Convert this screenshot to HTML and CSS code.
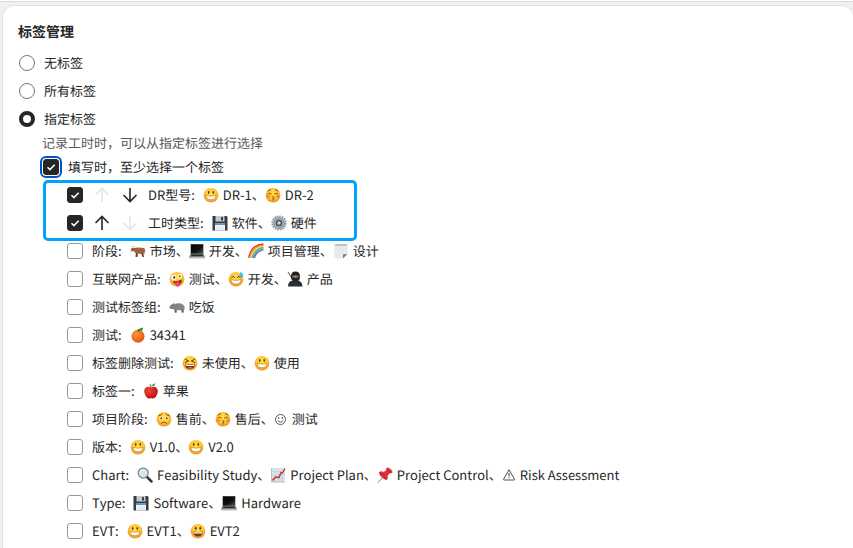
FILE: index.html
```html
<!DOCTYPE html>
<html lang="zh-CN">
<head>
<meta charset="utf-8">
<meta name="viewport" content="width=device-width, initial-scale=1">
<title>标签管理</title>
<link rel="stylesheet" href="styles.css">
</head>
<body>
<svg class="sprite" aria-hidden="true">
  <defs>
    <radialGradient id="skin" cx=".5" cy=".4" r=".6"><stop offset="0" stop-color="#ffe54d"/><stop offset=".6" stop-color="#fdc634"/><stop offset="1" stop-color="#ee8e20"/></radialGradient>
    <linearGradient id="screen" x1="0" y1="0" x2="1" y2="1"><stop offset="0" stop-color="#050505"/><stop offset=".6" stop-color="#111"/><stop offset="1" stop-color="#555"/></linearGradient>
    <radialGradient id="orange" cx=".4" cy=".35" r=".7"><stop offset="0" stop-color="#ff9a3c"/><stop offset="1" stop-color="#e2500f"/></radialGradient>
    <radialGradient id="apple" cx=".35" cy=".35" r=".7"><stop offset="0" stop-color="#f4463a"/><stop offset="1" stop-color="#b80d14"/></radialGradient>
    <symbol id="face" viewBox="0 0 32 32"><circle cx="16" cy="16.5" r="14.7" fill="url(#skin)"/></symbol>
    <symbol id="grin" viewBox="0 0 32 32"><use href="#face"/><ellipse cx="11.500" cy="11" rx="1.600" ry="2.800" fill="#6b3a0c"/><ellipse cx="20.500" cy="11" rx="1.600" ry="2.800" fill="#6b3a0c"/><path d="M6 17q10 2.500 20 0q-1 8.500-10 8.500q-9 0-10-8.500z" fill="#fffdf4" stroke="#a8641c" stroke-width="1"/></symbol>
    <symbol id="smiley" viewBox="0 0 32 32"><use href="#face"/><ellipse cx="11.500" cy="10.500" rx="1.900" ry="3" fill="#6b3a0c"/><ellipse cx="20.500" cy="10.500" rx="1.900" ry="3" fill="#6b3a0c"/><path d="M6.500 16.500q9.500 2.500 19 0q-.5 10.500-9.500 10.500q-9 0-9.500-10.500z" fill="#7a3a10"/><path d="M7.500 17.500q8.500 2 17 0q0 3.500-1.500 3.500h-14q-1.500 0-1.500-3.500z" fill="#fff"/></symbol>
    <symbol id="kiss" viewBox="0 0 32 32"><use href="#face"/><ellipse cx="6.500" cy="19" rx="4" ry="3" fill="#f27a2e" opacity=".7"/><ellipse cx="25.500" cy="19" rx="4" ry="3" fill="#f27a2e" opacity=".7"/><g fill="none" stroke="#74400f" stroke-width="1.800" stroke-linecap="round"><path d="M6 14q3.500-4 7 0M19 14q3.500-4 7 0M6 8q2-2.500 5-2.500M21 5.500q3 0 5 2.500"/><path d="M15 19q4 .5 2.500 2.500q-.5 1-2 1q3 .5 2.500 2q-.5 1.500-3 1.500" stroke="#b43b1b"/></g></symbol>
    <symbol id="zany" viewBox="0 0 32 32"><use href="#face"/><circle cx="9.500" cy="13" r="5" fill="#fff"/><circle cx="22" cy="10" r="3.800" fill="#fff"/><circle cx="10.500" cy="13" r="2.300" fill="#4b2b12"/><circle cx="21.500" cy="10.500" r="1.700" fill="#4b2b12"/><path d="M7 20q10 2 18-3q2 8-6 10q-8 1-12-7z" fill="#70300d"/><path d="M12 22q5 0 8-2l2 7q0 4-4 4.500q-4 0-5-4z" fill="#ee3f78"/></symbol>
    <symbol id="sweat" viewBox="0 0 32 32"><use href="#face"/><path d="M7 13q4-5 7 0M18 13q4-5 7 0" fill="none" stroke="#6b3a0c" stroke-width="2" stroke-linecap="round"/><path d="M6 17.500q10 2.500 20 0q-1 8.500-10 8.500q-9 0-10-8.500z" fill="#fff" stroke="#a8641c" stroke-width="1"/><path d="M26 1q5 6 4.500 9q-.5 3-3.500 3q-4 0-4.300-3.500q0-3 3.300-8.500z" fill="#4bb9ef"/></symbol>
    <symbol id="laugh" viewBox="0 0 32 32"><use href="#face"/><path d="M6.500 8.500l7 3.500l-7 3M25.500 8.500l-7 3.500l7 3" fill="none" stroke="#6b3a0c" stroke-width="2" stroke-linecap="round" stroke-linejoin="round"/><path d="M6 17.500q10 2 20 0q0 10-10 10q-10 0-10-10z" fill="#6e2c0c"/><path d="M7 18.500q9 2 18 0q0 3.500-2 3.500h-14q-2 0-2-3.500z" fill="#fff"/><path d="M11 25q5-3 10 0q-5 3.500-10 0z" fill="#ee5a55"/></symbol>
    <symbol id="worried" viewBox="0 0 32 32"><use href="#face"/><circle cx="10.500" cy="14" r="3.200" fill="#fff"/><circle cx="21.500" cy="14" r="3.200" fill="#fff"/><circle cx="10.500" cy="14.500" r="1.900" fill="#573010"/><circle cx="21.500" cy="14.500" r="1.900" fill="#573010"/><path d="M6 9.500q4-.5 6-3.500M26 9.500q-4-.5-6-3.500M10.500 25q5.500-6 11 0" fill="none" stroke="#74400f" stroke-width="1.900" stroke-linecap="round"/></symbol>
    <symbol id="floppy" viewBox="0 0 32 32"><path d="M1 2h28l2 2v27H1z" fill="#343d47"/><path d="M7 2h18v11H7z" fill="#c6cbd0"/><path d="M18 4h4v7h-4z" fill="#39424c"/><path d="M6 17h20v14H6z" fill="#f3f5f7"/><path d="M6 17h20v3H6z" fill="#5b94c9"/><path d="M8 24h16M8 28h16" stroke="#c2c8ce"/></symbol>
    <symbol id="gear" viewBox="0 0 32 32"><circle cx="16" cy="16" r="13.500" fill="none" stroke="#8f979f" stroke-width="3.500" stroke-dasharray="3.500 1.800"/><circle cx="16" cy="16" r="10.500" fill="#bcc3c9" stroke="#8b949d" stroke-width="3"/><circle cx="16" cy="16" r="5.500" fill="#8fa5bb" stroke="#44586e" stroke-width="3"/><circle cx="16" cy="16" r="2" fill="#e6ebef"/></symbol>
    <symbol id="ox" viewBox="0 0 32 32"><path d="M8 10q8-2 20 0q3 2 2.500 9l-.8 4q-1-2-.8-7l-1.400 4l.5 8h-3l-1-7q-5 1-8 0l-1 7h-3l-.5-8q-3-1-4-4q-4 1-6-2q0-3 3-4z" fill="#a0613f"/><path d="M12 20l-1 8h3l1-7zM24 19l3 9h-2l-3-8z" fill="#683a28"/><path d="M2 6q1 4 4 3q4 0 4-4q-2 2-4 2q-3 1-4-1z" fill="#d4bea1"/><path d="M1 15l4 1l-1 2q-3 0-3-3z" fill="#d29c79"/><circle cx="5" cy="12.500" r=".8" fill="#24120c"/></symbol>
    <symbol id="laptop" viewBox="0 0 32 32"><path d="M3 2h26v20H3z" fill="#70757b"/><path d="M4 3h24v18H4z" fill="url(#screen)"/><path d="M3 22h26l3 7H0z" fill="#777c82"/><path d="M5 23h22l1 3H4z" fill="#272a2e"/><path d="M0 29h32v2H0z" fill="#b5b9bd"/></symbol>
    <symbol id="rainbow" viewBox="0 0 32 32"><g fill="none" stroke-width="2.600"><path d="M1.500 30Q5 4 31 2" stroke="#e52d2f"/><path d="M3.700 30Q8 7 31 4.300" stroke="#f58423"/><path d="M6 30Q10 10 31 6.600" stroke="#fae33c"/><path d="M8.200 30Q12 13 31 8.900" stroke="#4ebd4d"/><path d="M10.400 30Q14 15 31 11.200" stroke="#3baee7"/><path d="M12.500 30Q16 18 31 13.500" stroke="#8952bd"/></g></symbol>
    <symbol id="notepad" viewBox="0 0 32 32"><path d="M3 2h26v20l-9 9H3z" fill="#e8ebed"/><path d="M3 2h26v4H3z" fill="#c9cdd1"/><path d="M20 31v-8l9-1z" fill="#737c83"/><path d="M6 4h20" stroke="#979ea4" stroke-width="1.500" stroke-dasharray="2 2"/><path d="M3 11h26M3 16h26M3 21h20M3 26h16" stroke="#dde2e5"/></symbol>
    <symbol id="ninja" viewBox="0 0 32 32"><path d="M2 2l8 13" stroke="#555" stroke-width="2"/><path d="M2 31q0-11 10-12h9q9 1 10 12z" fill="#292c31"/><path d="M17 1q9 0 9 10q0 10-9 10q-9 0-9-10q0-10 9-10z" fill="#202329"/><path d="M11 9.500q6-1.500 12 0v3q-6 1.500-12 0z" fill="#d69a50"/><circle cx="14" cy="11" r="1" fill="#151515"/><circle cx="20" cy="11" r="1" fill="#151515"/><path d="M9 21l14 10M24 20L10 31" stroke="#3b4047"/></symbol>
    <symbol id="hippo" viewBox="0 0 32 32"><path d="M1 16q1-5 7-6l2-2l2 2q9-3 16 1q4 3 3 10l-2 1v5h-4v-5q-5 1-10 0v5h-4v-5l-3-2q-6 1-7-4z" fill="#858387"/><path d="M12 21v6h3v-5zM25 21l1 6h3v-5z" fill="#626064"/><path d="M1 17q4 2 7 1" fill="none" stroke="#57555a"/><circle cx="7" cy="12.500" r=".9" fill="#242327"/></symbol>
    <symbol id="tangerine" viewBox="0 0 32 32"><circle cx="16" cy="18.500" r="13" fill="url(#orange)"/><path d="M17 8q-1-6 9-7q1 6-6 8z" fill="#4f8c2b"/><path d="M16 10l1-6" stroke="#496422" stroke-width="2"/></symbol>
    <symbol id="redapple" viewBox="0 0 32 32"><path d="M16 10q5-4 10-1q5 4 3 11q-3 10-9 11q-2 0-4-1q-2 1-4 1Q6 30 3 20Q1 12 6 9q5-3 10 1z" fill="url(#apple)"/><path d="M16 11q0-5-2-8" fill="none" stroke="#6d4220" stroke-width="2"/><path d="M17 7q1-6 8-6q-1 6-8 6z" fill="#56a532"/></symbol>
    <symbol id="smile-line" viewBox="0 0 28 28"><g fill="none" stroke="#3c3c3c" stroke-width="1.700"><circle cx="13" cy="15" r="10"/><path d="M7.500 17q5.500 7 11 0" stroke-linecap="round"/></g><circle cx="9.500" cy="12" r="1.500" fill="#333"/><circle cx="16.500" cy="12" r="1.500" fill="#333"/></symbol>
    <symbol id="magnifier" viewBox="0 0 32 32"><path d="M20 20l9 9" stroke="#33363a" stroke-width="5" stroke-linecap="round"/><circle cx="12.500" cy="12" r="10" fill="#d5e8ee" stroke="#7c858b" stroke-width="2.500"/><path d="M6 11q1-5 6-5" fill="none" stroke="#fff" stroke-width="2"/></symbol>
    <symbol id="chart" viewBox="0 0 32 32"><path d="M3 2h27v28H3z" fill="#d8e6ed"/><path d="M3 9h27M3 16h27M3 23h27M10 2v28M17 2v28M24 2v28" stroke="#b4c8d3"/><path d="M3 2v28h27" fill="none" stroke="#a2b1ba" stroke-width="1.500"/><path d="M5 27l6-7l7 1l4-10l3 1l5-9" fill="none" stroke="#d82930" stroke-width="2.800"/></symbol>
    <symbol id="pushpin" viewBox="0 0 32 32"><path d="M12 20L2 31" stroke="#949ba1" stroke-width="2.200"/><path d="M19 2q3-3 8 2q6 5 3 8q-3 1-4 0l-5 6q2 6-2 8q-6-1-10-6q-5-4-5-9q3-4 9-1l6-4q-1-2 0-4z" fill="#dc343d"/><path d="M19 5q5 0 8 7M5 12q9 1 13 13" fill="none" stroke="#a91d2a" stroke-width="1.500"/></symbol>
    <symbol id="warning-line" viewBox="0 0 28 28"><path d="M14 3.500L25 22.500q.5 1.500-1 1.500H4q-1.500 0-1-1.500z" fill="none" stroke="#3c3c3c" stroke-width="1.800" stroke-linejoin="round"/><path d="M14 10v7M14 19v2" stroke="#333" stroke-width="2"/></symbol>
    <symbol id="arrow-up" viewBox="0 0 16 16"><path d="M8 15V1.500M1.500 8L8 1.500L14.500 8" fill="none" stroke="currentColor" stroke-width="1.600"/></symbol>
    <symbol id="arrow-down" viewBox="0 0 16 16"><path d="M8 1v13.500M1.500 8L8 14.500L14.500 8" fill="none" stroke="currentColor" stroke-width="1.600"/></symbol>
  </defs>
</svg>
<main class="card">
  <h1 class="title">标签管理</h1>
  <form class="options">
    <label class="row"><input class="radio" type="radio" name="mode">无标签</label>
    <label class="row"><input class="radio" type="radio" name="mode">所有标签</label>
    <label class="row"><input class="radio" type="radio" name="mode" checked>指定标签</label>
    <div class="details">
      <p class="hint">记录工时时，可以从指定标签进行选择</p>
      <div class="choices">
      <label class="row"><input class="check focused" type="checkbox" checked>填写时，至少选择一个标签</label>
      <div class="groups">
        <div class="selected">
          <div class="row">
            <input class="check" type="checkbox" id="dr" checked>
            <div class="order">
              <button class="move" type="button" aria-label="上移" disabled><svg><use href="#arrow-up"/></svg></button>
              <button class="move" type="button" aria-label="下移"><svg><use href="#arrow-down"/></svg></button>
            </div>
            <label class="group" for="dr"><span class="name">DR型号:</span><svg class="emoji"><use href="#grin"/></svg>DR-1、<svg class="emoji"><use href="#kiss"/></svg>DR-2</label>
          </div>
          <div class="row">
            <input class="check" type="checkbox" id="hours" checked>
            <div class="order">
              <button class="move" type="button" aria-label="上移"><svg><use href="#arrow-up"/></svg></button>
              <button class="move" type="button" aria-label="下移" disabled><svg><use href="#arrow-down"/></svg></button>
            </div>
            <label class="group" for="hours"><span class="name">工时类型:</span><svg class="emoji"><use href="#floppy"/></svg>软件、<svg class="emoji"><use href="#gear"/></svg>硬件</label>
          </div>
        </div>
        <label class="row"><input class="check" type="checkbox"><span class="group"><span class="name">阶段:</span><svg class="emoji"><use href="#ox"/></svg>市场、<svg class="emoji"><use href="#laptop"/></svg>开发、<svg class="emoji"><use href="#rainbow"/></svg>项目管理、<svg class="emoji"><use href="#notepad"/></svg>设计</span></label>
        <label class="row"><input class="check" type="checkbox"><span class="group"><span class="name">互联网产品:</span><svg class="emoji"><use href="#zany"/></svg>测试、<svg class="emoji"><use href="#sweat"/></svg>开发、<svg class="emoji"><use href="#ninja"/></svg>产品</span></label>
        <label class="row"><input class="check" type="checkbox"><span class="group"><span class="name">测试标签组:</span><svg class="emoji"><use href="#hippo"/></svg>吃饭</span></label>
        <label class="row"><input class="check" type="checkbox"><span class="group"><span class="name">测试:</span><svg class="emoji"><use href="#tangerine"/></svg>34341</span></label>
        <label class="row"><input class="check" type="checkbox"><span class="group"><span class="name">标签删除测试:</span><svg class="emoji"><use href="#laugh"/></svg>未使用、<svg class="emoji"><use href="#grin"/></svg>使用</span></label>
        <label class="row"><input class="check" type="checkbox"><span class="group"><span class="name">标签一:</span><svg class="emoji"><use href="#redapple"/></svg>苹果</span></label>
        <label class="row"><input class="check" type="checkbox"><span class="group"><span class="name">项目阶段:</span><svg class="emoji"><use href="#worried"/></svg>售前、<svg class="emoji"><use href="#kiss"/></svg>售后、<svg class="emoji line"><use href="#smile-line"/></svg>测试</span></label>
        <label class="row"><input class="check" type="checkbox"><span class="group"><span class="name">版本:</span><svg class="emoji"><use href="#grin"/></svg>V1.0、<svg class="emoji"><use href="#grin"/></svg>V2.0</span></label>
        <label class="row"><input class="check" type="checkbox"><span class="group"><span class="name">Chart:</span><svg class="emoji"><use href="#magnifier"/></svg>Feasibility Study、<svg class="emoji"><use href="#chart"/></svg>Project Plan、<svg class="emoji"><use href="#pushpin"/></svg>Project Control、<svg class="emoji line"><use href="#warning-line"/></svg>Risk Assessment</span></label>
        <label class="row"><input class="check" type="checkbox"><span class="group"><span class="name">Type:</span><svg class="emoji"><use href="#floppy"/></svg>Software、<svg class="emoji"><use href="#laptop"/></svg>Hardware</span></label>
        <label class="row"><input class="check" type="checkbox"><span class="group"><span class="name">EVT:</span><svg class="emoji"><use href="#grin"/></svg>EVT1、<svg class="emoji"><use href="#smiley"/></svg>EVT2</span></label>
      </div>
      </div>
    </div>
  </form>
</main>
</body>
</html>
```

FILE: styles.css
```css
*, *::before, *::after { box-sizing: border-box; }

body {
  margin: 0;
  height: 100vh;
  overflow: hidden;
  padding: 5px 0 0 2px;
  background: linear-gradient(#fff 1px, #d9dddf 1px, #d9dddf 2px, #eef0f2 2px);
  color: #262626;
  font: 13px/20px "Noto Sans CJK SC", sans-serif;
  font-kerning: none;
  text-rendering: geometricPrecision;
}

.sprite { position: absolute; width: 0; height: 0; }

.card {
  min-height: 100%;
  padding: 14px 15px;
  background: #fff;
  border: 1px solid #dfe2e4;
  border-width: 1px 0 0 1px;
  border-radius: 12px 12px 0 0;
}

.title { margin: 0 0 5px; font-size: 14px; line-height: 24px; font-weight: 700; }

.options { padding-left: 1px; }

.row { display: flex; align-items: center; height: 28px; gap: 9px; }

.radio, .check {
  appearance: none;
  flex: none;
  width: 16px;
  height: 16px;
  margin: 0;
  border: 1px solid #999;
  background: #fff;
}

.radio { border-radius: 50%; border-color: #777; }
.radio:checked { border: 4px solid #262626; }

.check { border-radius: 3px; }

.check:checked {
  border-color: #262626;
  background: #262626 url("data:image/svg+xml,%3Csvg xmlns='http://www.w3.org/2000/svg' viewBox='0 0 14 14'%3E%3Cpath d='M3.500 7.200l2.400 2.400l4.800-4.900' fill='none' stroke='white' stroke-width='1.500'/%3E%3C/svg%3E") center / 14px 14px no-repeat;
}

.check.focused { outline: 2px solid #0052cc; outline-offset: 1px; }

.details { padding-left: 23px; }

.choices { padding-left: 1px; }

.hint { margin: 0; color: #595959; }

.groups { padding-left: 24px; }

.selected { position: relative; }

.selected::after {
  content: "";
  position: absolute;
  top: -1px;
  left: -24px;
  width: 314px;
  bottom: -4px;
  border: 3px solid #00a3f9;
  border-radius: 5px;
  pointer-events: none;
}

.selected .row { gap: 6px; }

.order { display: flex; gap: 4px; padding-left: 1px; }

.move {
  display: flex;
  align-items: center;
  justify-content: center;
  width: 24px;
  height: 24px;
  padding: 0;
  border: 0;
  background: none;
  color: #262626;
}

.move:disabled { color: #e3e5e8; }

.move svg { width: 16px; height: 16px; }

.group { display: flex; align-items: center; white-space: nowrap; }

.name { margin-right: 8px; }

.emoji { flex: none; width: 16px; height: 16px; margin-right: 4px; }

.emoji.line { width: 14px; height: 14px; }
```
